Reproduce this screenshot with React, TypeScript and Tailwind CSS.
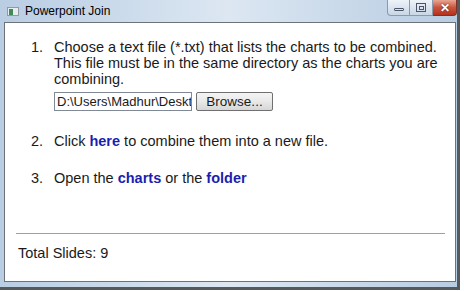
const steps = [1, 2, 3];

function TitleButtons() {
  return (
    <div className="flex h-[16px] self-start">
      <div className="flex h-full w-[23px] items-center justify-center rounded-bl-[4px] border border-t-0 border-[#8a9bb0] bg-gradient-to-b from-[#eef3f9] to-[#c9d6e6]">
        <div className="mt-[4px] h-[3px] w-[10px] rounded-[1px] border border-[#4a5668]" />
      </div>
      <div className="flex h-full w-[23px] items-center justify-center border-b border-r border-[#8a9bb0] bg-gradient-to-b from-[#eef3f9] to-[#c9d6e6]">
        <div className="flex h-[9px] w-[10px] items-center justify-center border border-[#4a5668]">
          <div className="h-[4px] w-[5px] border border-[#4a5668]" />
        </div>
      </div>
      <div className="flex h-full w-[24px] items-center justify-center rounded-br-[4px] border-b border-r border-[#7a3328] bg-gradient-to-b from-[#e8a593] via-[#c9543c] to-[#b5301c]">
        <span className="text-[12px] font-bold leading-none text-white [text-shadow:0_0_2px_#5a1a10]">✕</span>
      </div>
    </div>
  );
}

export default function App() {
  return (
    <div className="h-[291px] w-[464px] bg-white font-['Liberation_Sans',Arial,sans-serif]">
      <div className="flex h-[290px] w-[460px] flex-col border-b-[3px] border-r-[3px] border-[#55595e] bg-gradient-to-r from-[#b9cde3] via-[#dce7f2] to-[#b8cce2]">
        {/* title bar */}
        <div className="flex h-[22px] items-start">
          <div className="ml-[7px] mt-[7px] flex h-[9px] w-[12px] items-center border border-[#8f9aa3] bg-[#e8ecef]">
            <div className="ml-[1px] h-[6px] w-[4px] bg-[#3f8a5a]" />
          </div>
          <span className="ml-[6px] mt-[4px] text-[12px] leading-[15px] text-black">Powerpoint Join</span>
          <div className="flex-1" />
          <TitleButtons />
        </div>
        {/* client area */}
        <div className="mb-[5px] ml-[4px] mr-[1px] flex flex-1 flex-col border border-[#6c7278] bg-white px-[11px] text-[14.5px] leading-[16px] text-[#1a1a1a]">
          <ol className="mt-[16px] flex flex-col">
            {steps.map((n) => (
              <li key={n} className={`flex ${n === 2 ? "mt-[22px]" : n === 3 ? "mt-[21px]" : ""}`}>
                <span className="w-[38px] shrink-0 pl-[15px]">{n}.</span>
                <div className="flex-1">
                  {n === 1 && (
                    <>
                      <p>Choose a text file (*.txt) that lists the charts to be combined.</p>
                      <p>This file must be in the same directory as the charts you are</p>
                      <p>combining.</p>
                      <div className="mt-[5px] flex items-center gap-[4px]">
                        <div className="h-[19px] w-[138px] overflow-hidden whitespace-nowrap border border-[#7f8a96] pl-[2px] text-[13px] leading-[17px]">
                          D:\Users\Madhur\Desktop\charts.txt
                        </div>
                        <button className="h-[19px] w-[77px] rounded-[2px] border border-[#707070] bg-gradient-to-b from-[#f4f4f4] via-[#e9e9e9] to-[#d6d6d6] text-[13.5px] leading-[15px]">
                          Browse...
                        </button>
                      </div>
                    </>
                  )}
                  {n === 2 && (
                    <p>
                      Click <span className="font-bold text-[#1a1fb0]">here</span> to combine them into a new file.
                    </p>
                  )}
                  {n === 3 && (
                    <p>
                      Open the <span className="font-bold text-[#1a1fb0]">charts</span> or the{" "}
                      <span className="font-bold text-[#1a1fb0]">folder</span>
                    </p>
                  )}
                </div>
              </li>
            ))}
          </ol>
          <div className="flex-1" />
          <div className="mr-[-1px] border-t border-[#a0a0a0]" />
          <p className="mb-[20px] mt-[11px] pl-[2px]">Total Slides: 9</p>
        </div>
      </div>
    </div>
  );
}
